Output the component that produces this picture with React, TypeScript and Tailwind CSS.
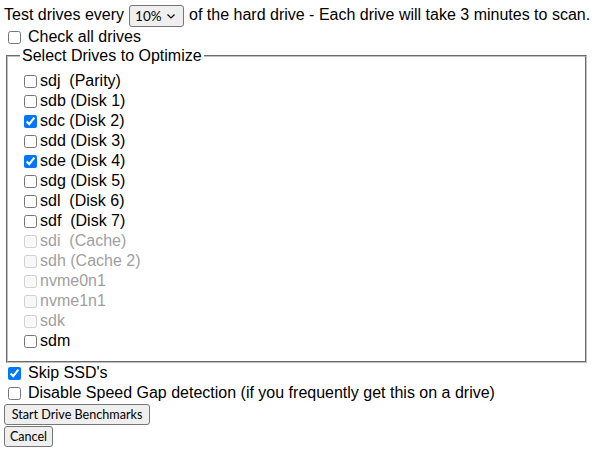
import { useState } from "react";

type Drive = { id: string; label: string; checked?: boolean; disabled?: boolean };

const drives: Drive[] = [
  { id: "sdj", label: "sdj  (Parity)" },
  { id: "sdb", label: "sdb (Disk 1)" },
  { id: "sdc", label: "sdc (Disk 2)", checked: true },
  { id: "sdd", label: "sdd (Disk 3)" },
  { id: "sde", label: "sde (Disk 4)", checked: true },
  { id: "sdg", label: "sdg (Disk 5)" },
  { id: "sdl", label: "sdl  (Disk 6)" },
  { id: "sdf", label: "sdf  (Disk 7)" },
  { id: "sdi", label: "sdi  (Cache)", disabled: true },
  { id: "sdh", label: "sdh (Cache 2)", disabled: true },
  { id: "nvme0n1", label: "nvme0n1", disabled: true },
  { id: "nvme1n1", label: "nvme1n1", disabled: true },
  { id: "sdk", label: "sdk", disabled: true },
  { id: "sdm", label: "sdm" },
];

const box = "m-0 ml-[4px] mr-[3px] h-[13px] w-[13px] shrink-0";
const control = "font-['Segoe_UI',Lato,sans-serif] text-[12.6px]";

export default function App() {
  const [checked, setChecked] = useState<Record<string, boolean>>(
    Object.fromEntries(drives.map((d) => [d.id, !!d.checked]))
  );
  const [skipSsd, setSkipSsd] = useState(true);
  const [noGap, setNoGap] = useState(false);
  const [pct, setPct] = useState("10");

  const allOn = drives.filter((d) => !d.disabled).every((d) => checked[d.id]);

  const toggleAll = () => {
    const next = { ...checked };
    drives.forEach((d) => {
      if (!d.disabled) next[d.id] = !allOn;
    });
    setChecked(next);
  };

  return (
    <div className="min-h-screen bg-white pl-[4px] pr-[8px] font-['Liberation_Sans',Arial,sans-serif] text-[16px] leading-[18px] text-black">
      {/* scan percentage */}
      <div className="flex h-[27px] items-start whitespace-nowrap pt-[5px]">
        <span className="pt-[1px]">Test drives every</span>
        <span className="relative mx-[5px] inline-flex">
          <select
            value={pct}
            onChange={(e) => setPct(e.target.value)}
            className={`h-[22px] w-[55px] appearance-none rounded-[3px] border border-[#767676] bg-[#efefef] pl-[5px] ${control} text-[13.5px]`}
          >
            <option value="5">5%</option>
            <option value="10">10%</option>
            <option value="25">25%</option>
            <option value="50">50%</option>
            <option value="100">100%</option>
          </select>
          <svg
            className="pointer-events-none absolute right-[9px] top-[9px]"
            width="8"
            height="5"
            viewBox="0 0 8 5"
            fill="none"
            stroke="#000"
            strokeWidth="1.2"
          >
            <path d="M0.5 0.5 L4 4 L7.5 0.5" />
          </svg>
        </span>
        <span className="pt-[1px]">of the hard drive - Each drive will take 3 minutes to scan.</span>
      </div>

      <label className="flex h-[20px] items-center">
        <input type="checkbox" checked={allOn} onChange={toggleAll} className={box} />
        <span className="ml-[4px]">Check all drives</span>
      </label>

      {/* drive list */}
      <fieldset className="mx-[2px] border-2 border-[#c0c0c0] px-[12px] pb-[10px] pt-[6px] [border-style:groove]">
        <legend className="px-[2px] leading-[18.4px]">Select Drives to Optimize</legend>
        {drives.map((d) => (
          <label
            key={d.id}
            className={`flex h-[20px] items-center whitespace-pre ${d.disabled ? "text-[#a0a0a0]" : ""}`}
          >
            <input
              type="checkbox"
              disabled={d.disabled}
              checked={checked[d.id]}
              onChange={() => setChecked({ ...checked, [d.id]: !checked[d.id] })}
              className={box}
            />
            {d.label}
          </label>
        ))}
      </fieldset>

      <label className="flex h-[20px] items-center">
        <input type="checkbox" checked={skipSsd} onChange={() => setSkipSsd(!skipSsd)} className={box} />
        <span className="ml-[4px]">Skip SSD's</span>
      </label>
      <label className="flex h-[20px] items-center">
        <input type="checkbox" checked={noGap} onChange={() => setNoGap(!noGap)} className={box} />
        <span className="ml-[4px]">Disable Speed Gap detection (if you frequently get this on a drive)</span>
      </label>

      <div className="mt-[1px] flex flex-col items-start gap-[1px]">
        <button
          type="button"
          className={`h-[21px] w-[146px] whitespace-nowrap rounded-[3px] border border-[#767676] bg-[#efefef] px-0 text-center ${control}`}
        >
          Start Drive Benchmarks
        </button>
        <button
          type="button"
          className={`h-[21px] w-[49px] whitespace-nowrap rounded-[3px] border border-[#767676] bg-[#efefef] px-0 text-center ${control}`}
        >
          Cancel
        </button>
      </div>
    </div>
  );
}
